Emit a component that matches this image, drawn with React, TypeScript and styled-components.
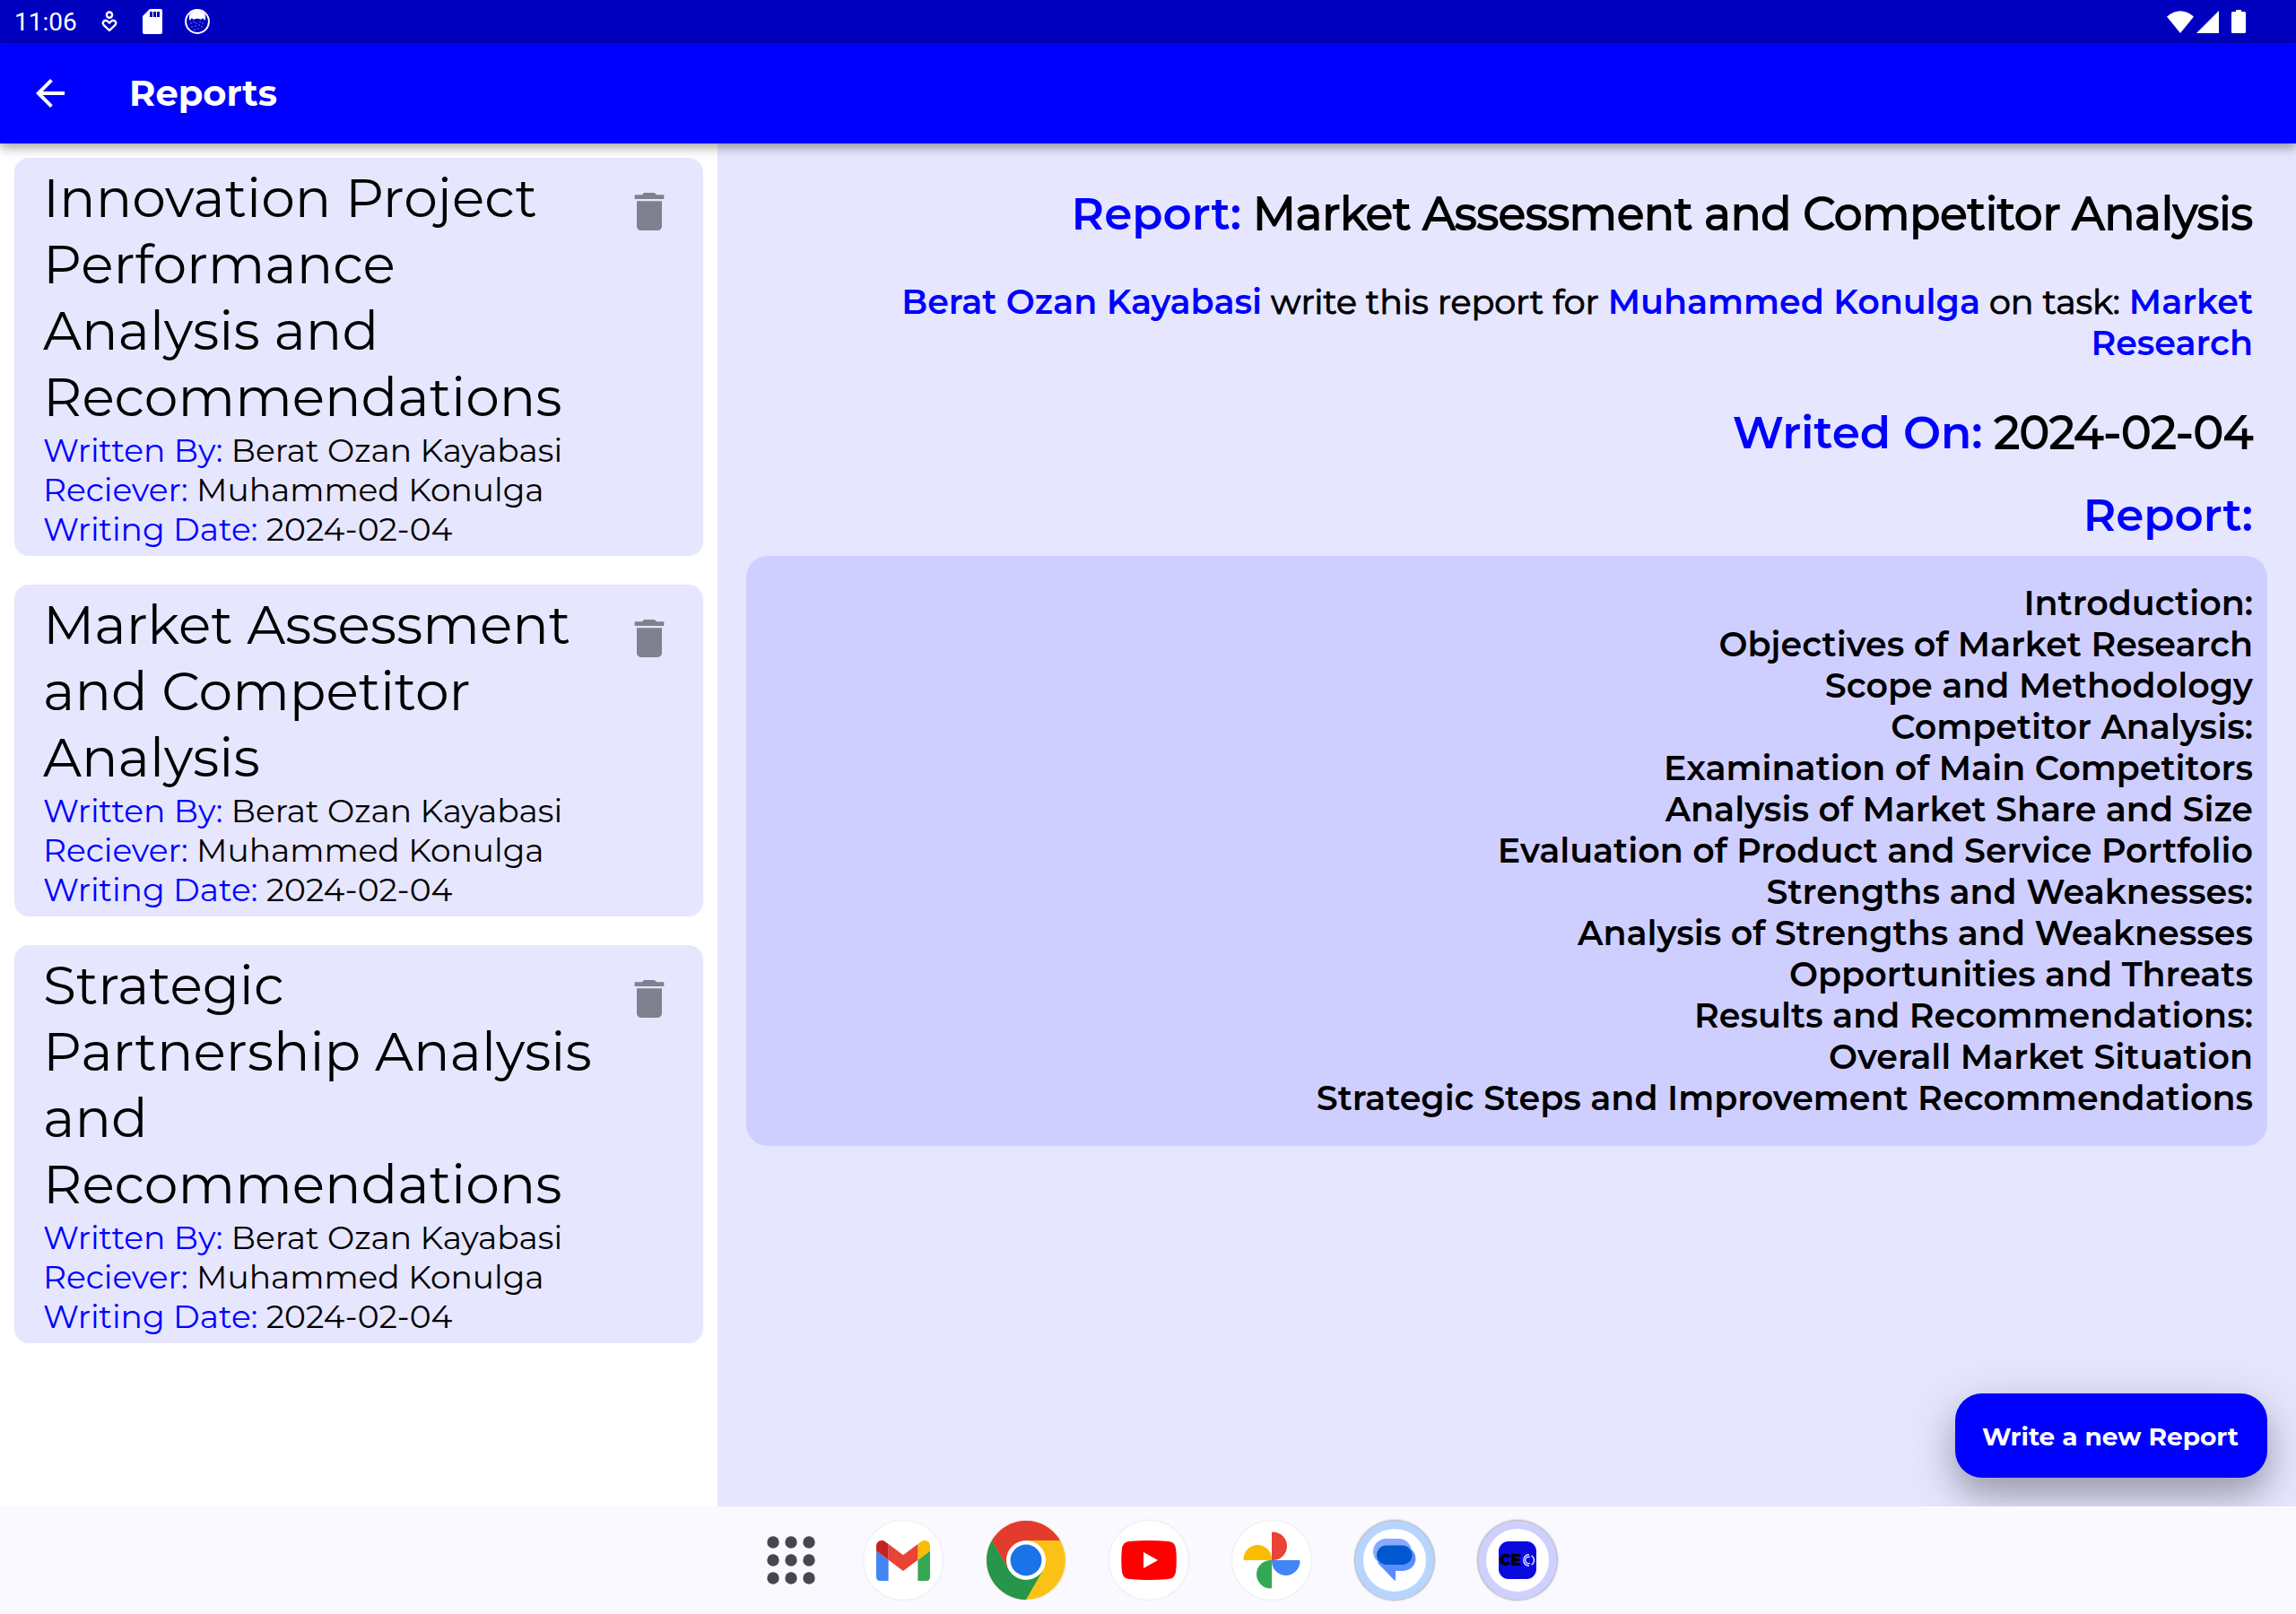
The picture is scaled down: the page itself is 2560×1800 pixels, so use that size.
import React from "react";
import styled, { createGlobalStyle } from "styled-components";

const GlobalStyle = createGlobalStyle`
  *, *::before, *::after { box-sizing: border-box; }
  body { margin: 0; font-family: Montserrat, Inter, "Noto Sans", sans-serif; color: #000; background: #fff; }
  h1, h2, h3, p, ul { margin: 0; padding: 0; }
  button { border: 0; background: none; padding: 0; font: inherit; color: inherit; cursor: pointer; }
  svg { display: block; }
`;

const Screen = styled.div`
  display: flex;
  flex-direction: column;
  min-height: 100vh;
`;

const StatusBar = styled.div`
  display: flex;
  align-items: center;
  justify-content: space-between;
  height: 48px;
  padding: 0 56px 0 16px;
  background: #0000bf;
  color: #fff;
`;

const StatusGroup = styled.div<{ $gap: number }>`
  display: flex;
  align-items: center;
  gap: ${(p) => p.$gap}px;
`;

const Clock = styled.time`
  padding-top: 2px;
  font-family: Roboto, sans-serif;
  font-size: 28px;
  line-height: 46px;
`;

const Spacer = styled.span`
  width: 8px;
`;

const AppBar = styled.header`
  position: relative;
  z-index: 1;
  display: flex;
  align-items: center;
  gap: 64px;
  height: 112px;
  padding: 0 32px;
  background: #00f;
  color: #fff;
  box-shadow: 0 4px 12px rgba(0, 0, 0, 0.4);
`;

const IconButton = styled.button`
  display: flex;
  flex: none;
  align-items: center;
  justify-content: center;
`;

const BarTitle = styled.h1`
  font-size: 40px;
  line-height: 48px;
  font-weight: 700;
`;

const Main = styled.main`
  display: flex;
  flex: 1;
`;

const ReportList = styled.ul`
  display: flex;
  flex-direction: column;
  gap: 32px;
  flex: 0 0 31.25%;
  padding: 16px;
  list-style: none;
`;

const Card = styled.li`
  display: flex;
  align-items: flex-start;
  justify-content: space-between;
  padding: 8px 32px;
  border-radius: 16px;
  background: #e6e6ff;
`;

const CardText = styled.div`
  flex: 0 1 620px;
`;

const CardTitle = styled.h2`
  font-size: 60px;
  line-height: 74px;
  font-weight: 400;
`;

const Meta = styled.p`
  font-size: 36px;
  line-height: 44px;
  font-weight: 400;
`;

const Accent = styled.span`
  color: #00f;
`;

const DeleteButton = styled(IconButton)`
  margin-top: 24px;
  color: #80808e;
`;

const Detail = styled.section`
  position: relative;
  flex: 1;
  min-width: 0;
  overflow: hidden;
  padding: 46px 32px 160px;
  background: #e6e6ff;
  text-align: right;
`;

const Heading = styled.h2<{ $after: number }>`
  margin-bottom: ${(p) => p.$after}px;
  padding: 0 16px;
  font-size: 50px;
  line-height: 66px;
  font-weight: 400;
  -webkit-text-stroke: 2px #000;

  ${Accent} {
    font-weight: 600;
    -webkit-text-stroke: 0;
  }
`;

const Summary = styled.p`
  margin-bottom: 44px;
  padding: 0 16px;
  font-size: 38px;
  line-height: 46px;
  font-weight: 400;
  -webkit-text-stroke: 1px #000;

  ${Accent} {
    font-weight: 600;
    -webkit-text-stroke: 0;
  }
`;

const ReportBody = styled.div`
  padding: 30px 16px;
  border-radius: 24px;
  background: #cfcfff;
  font-size: 38px;
  line-height: 46px;
  font-weight: 600;
`;

const Fab = styled.button`
  position: absolute;
  right: 32px;
  bottom: 32px;
  height: 94px;
  padding: 2px 32px 0 30px;
  border-radius: 30px;
  background: #00f;
  color: #fff;
  font-size: 28px;
  line-height: 36px;
  font-weight: 700;
  box-shadow: 0 16px 56px rgba(0, 0, 0, 0.22), 0 20px 32px rgba(0, 0, 0, 0.16);
`;

const Dock = styled.nav`
  display: flex;
  align-items: center;
  justify-content: center;
  gap: 49px;
  height: 120px;
  padding-left: 25px;
  background: #faf9ff;
`;

const AppIcon = styled.button<{ $ring?: string }>`
  display: flex;
  align-items: center;
  justify-content: center;
  width: 88px;
  height: 88px;
  border-radius: 50%;
  background: #fff;
  border: ${(p) => (p.$ring ? `9px solid ${p.$ring}` : "0")};
  box-shadow: ${(p) => (p.$ring ? "0 0 2px 1px rgba(0,0,0,.3)" : "0 0 3px rgba(0,0,0,.12)")};
`;

const AppsButton = styled(IconButton)`
  width: 64px;
  height: 64px;
`;

const reports = [
  "Innovation Project Performance Analysis and Recommendations",
  "Market Assessment and Competitor Analysis",
  "Strategic Partnership Analysis and Recommendations",
];

const bodyLines = [
  "Introduction:",
  "Objectives of Market Research",
  "Scope and Methodology",
  "Competitor Analysis:",
  "Examination of Main Competitors",
  "Analysis of Market Share and Size",
  "Evaluation of Product and Service Portfolio",
  "Strengths and Weaknesses:",
  "Analysis of Strengths and Weaknesses",
  "Opportunities and Threats",
  "Results and Recommendations:",
  "Overall Market Situation",
  "Strategic Steps and Improvement Recommendations",
];

const HeartPersonIcon = () => (
  <svg width="24" height="24" viewBox="-3 0 24 24" fill="none" stroke="#fff" strokeWidth="2.4">
    <circle cx="9" cy="4.6" r="3.1" />
    <path d="M9 22 2.6 15.8C-.2 12.6 4.6 9 7.4 12L9 13.6 10.6 12c2.8-3 7.6.6 4.8 3.8Z" strokeLinejoin="round" />
  </svg>
);

const SdCardIcon = () => (
  <svg width="24" height="28" viewBox="-1 0 24 28">
    <path fill="#fff" d="M8 0h12a2 2 0 0 1 2 2v24a2 2 0 0 1-2 2H2a2 2 0 0 1-2-2V8Z" />
    <path fill="#0000bf" d="M8 3h3v6H8zM12 3h3v6h-3zM16 3h3v6h-3z" />
  </svg>
);

const CatIcon = () => (
  <svg width="28" height="28" viewBox="0 0 28 28">
    <circle cx="14" cy="14" r="12.9" fill="none" stroke="#fff" strokeWidth="2" />
    <path fill="#fff" d="M5.500 13Q4.500 10 5 7 8 1.500 14 1.500T23 7q.5 3-.5 6l-2.500-3q-1 2.500-2.500 1.500-3.500-1.500-7 0Q9 12.500 8 10Z" />
    <path
      stroke="#fff"
      strokeWidth="1"
      strokeLinecap="round"
      d="M7 16h.1M10 14.500h.1M13 16h.1M17 14.500h.1M20 16h.1M8 20h.1M12 19h.1M16 18h.1M19 20h.1M11 23h.1M15 22h.1"
    />
  </svg>
);

const BackIcon = () => (
  <svg width="48" height="48" viewBox="0 0 24 24" fill="#fff">
    <path d="M20 11H7.830l5.590-5.590L12 4l-8 8 8 8 1.410-1.410L7.830 13H20v-2z" />
  </svg>
);

const TrashIcon = () => (
  <svg width="56" height="56" viewBox="0 0 24 24" fill="currentColor">
    <path d="M6 19c0 1.100.9 2 2 2h8c1.100 0 2-.9 2-2V7H6v12zM19 4h-3.500l-1-1h-5l-1 1H5v2h14V4z" />
  </svg>
);

const GridIcon = () => (
  <svg width="54" height="54" viewBox="0 0 54 54" fill="#464650">
    {[7, 27, 47].map((y) => [7, 27, 47].map((x) => <circle key={`${x}-${y}`} cx={x} cy={y} r="6.7" />))}
  </svg>
);

const GmailIcon = () => (
  <svg width="60" height="45" viewBox="52 42 88 66">
    <path fill="#4285f4" d="M58 108h14V74L52 59v43c0 3.320 2.690 6 6 6" />
    <path fill="#34a853" d="M120 108h14c3.320 0 6-2.690 6-6V59l-20 15" />
    <path fill="#fbbc04" d="M120 48v26l20-15v-8c0-7.420-8.470-11.650-14.400-7.200" />
    <path fill="#ea4335" d="M72 74V48l24 18 24-18v26L96 92" />
    <path fill="#c5221f" d="M52 51v8l20 15V48l-5.600-4.200c-5.940-4.450-14.400-.22-14.400 7.200" />
  </svg>
);

const ChromeIcon = () => (
  <svg width="88" height="88" viewBox="0 0 88 88">
    <circle cx="44" cy="44" r="44" fill="#fbc116" />
    <path fill="#e33b2e" d="M5.900 22A44 44 0 0 1 82.100 22H44L25 55Z" />
    <path fill="#25964a" d="M5.900 22A44 44 0 0 0 44 88L63 55 44 60 25 55Z" />
    <circle cx="44" cy="44" r="22" fill="#fff" />
    <circle cx="44" cy="44" r="17.400" fill="#1a73e8" />
  </svg>
);

const YouTubeIcon = () => (
  <svg width="62" height="44" viewBox="0 0 62 44">
    <path fill="red" d="M9 1Q31-1 53 1q7 .6 8 8 1.500 13 0 26-1 7.400-8 8-22 2-44 0-7-.6-8-8-1.500-13 0-26 1-7.400 8-8Z" />
    <path fill="#fff" d="M25 13v18l16-9Z" />
  </svg>
);

const PhotosIcon = () => (
  <svg width="64" height="64" viewBox="0 0 64 64">
    <path fill="#ea4335" d="M32 32V1.500q0-1 1-1a16 15.750 0 0 1 0 31.500Z" />
    <path fill="#4285f4" d="M32 32h30.500q1 0 1 1a15.750 16 0 0 1-31.500 0Z" />
    <path fill="#34a853" d="M32 32v30.500q0 1-1 1a16 15.750 0 0 1 0-31.500Z" />
    <path fill="#fbbc04" d="M32 32H1.500q-1 0-1-1a15.750 16 0 0 1 31.500 0Z" />
  </svg>
);

const MessagesIcon = () => (
  <svg width="48" height="48" viewBox="0 0 48 48">
    <path fill="#5a8dff" d="M38 9Q47.500 13 47.500 22.500A14 14 0 0 1 33.500 35.700H25V45.500q0 2-1.500.8L5 27Z" />
    <rect x="0" y="0" width="43" height="29" rx="14.500" fill="#87a9ff" />
    <path fill="#5a8dff" d="M5 26 14 35.700H34L36 27Z" />
    <rect x="4" y="7.500" width="39.500" height="21.500" rx="10.700" fill="#0057d0" />
  </svg>
);

const CeoTile = styled.span`
  display: flex;
  align-items: center;
  justify-content: center;
  gap: 1px;
  width: 42px;
  height: 42px;
  border-radius: 11px;
  background: #0909e0;
  color: #000;
  font-size: 17px;
  line-height: 20px;
  font-weight: 900;
`;

const CeoIcon = () => (
  <CeoTile>
    CE
    <svg width="14" height="14" viewBox="0 0 14 14" fill="none" stroke="#fff" strokeWidth="1.2">
      <path d="M8 .7A6.300 6.300 0 1 0 8 13.300M9 3.500A3.800 3.800 0 1 0 9 10.500M10.500 1.700a6.200 6.200 0 0 1 0 10.600" />
    </svg>
  </CeoTile>
);

const WifiIcon = () => (
  <svg width="30" height="25" viewBox="0 0 30 25">
    <path fill="#fff" d="M0 6.500Q15-6 30 6.500L15 25Z" />
  </svg>
);

const SignalIcon = () => (
  <svg width="25" height="25" viewBox="0 0 25 25">
    <path fill="#fff" d="M25 0v25H0Z" />
  </svg>
);

const BatteryIcon = () => (
  <svg width="16" height="26" viewBox="0 0 16 26">
    <path fill="#fff" d="M5 0h6v2h3.500A1.500 1.500 0 0 1 16 3.500v21a1.500 1.500 0 0 1-1.500 1.500h-13A1.500 1.500 0 0 1 0 24.500v-21A1.500 1.500 0 0 1 1.500 2H5Z" />
  </svg>
);

export default function App() {
  return (
    <Screen>
      <GlobalStyle />
      <StatusBar>
        <StatusGroup $gap={24}>
          <Clock>11:06</Clock>
          <HeartPersonIcon />
          <SdCardIcon />
          <CatIcon />
        </StatusGroup>
        <StatusGroup $gap={3}>
          <WifiIcon />
          <SignalIcon />
          <Spacer />
          <BatteryIcon />
        </StatusGroup>
      </StatusBar>
      <AppBar>
        <IconButton aria-label="Back">
          <BackIcon />
        </IconButton>
        <BarTitle>Reports</BarTitle>
      </AppBar>
      <Main>
        <ReportList>
          {reports.map((title) => (
            <Card key={title}>
              <CardText>
                <CardTitle>{title}</CardTitle>
                <Meta><Accent>Written By:</Accent> Berat Ozan Kayabasi</Meta>
                <Meta><Accent>Reciever:</Accent> Muhammed Konulga</Meta>
                <Meta><Accent>Writing Date:</Accent> 2024-02-04</Meta>
              </CardText>
              <DeleteButton aria-label="Delete report">
                <TrashIcon />
              </DeleteButton>
            </Card>
          ))}
        </ReportList>
        <Detail>
          <Heading $after={42}><Accent>Report:</Accent> Market Assessment and Competitor Analysis</Heading>
          <Summary>
            <Accent>Berat Ozan Kayabasi</Accent> write this report for <Accent>Muhammed Konulga</Accent> on task:{" "}
            <Accent>Market Research</Accent>
          </Summary>
          <Heading $after={26}><Accent>Writed On:</Accent> 2024-02-04</Heading>
          <Heading $after={12}><Accent>Report:</Accent></Heading>
          <ReportBody>
            {bodyLines.map((line) => (
              <p key={line}>{line}</p>
            ))}
          </ReportBody>
          <Fab>Write a new Report</Fab>
        </Detail>
      </Main>
      <Dock>
        <AppsButton aria-label="All apps"><GridIcon /></AppsButton>
        <AppIcon aria-label="Gmail"><GmailIcon /></AppIcon>
        <AppIcon aria-label="Chrome"><ChromeIcon /></AppIcon>
        <AppIcon aria-label="YouTube"><YouTubeIcon /></AppIcon>
        <AppIcon aria-label="Photos"><PhotosIcon /></AppIcon>
        <AppIcon aria-label="Messages" $ring="#b7d5ff"><MessagesIcon /></AppIcon>
        <AppIcon aria-label="CEO" $ring="#d0d0ff"><CeoIcon /></AppIcon>
      </Dock>
    </Screen>
  );
}
